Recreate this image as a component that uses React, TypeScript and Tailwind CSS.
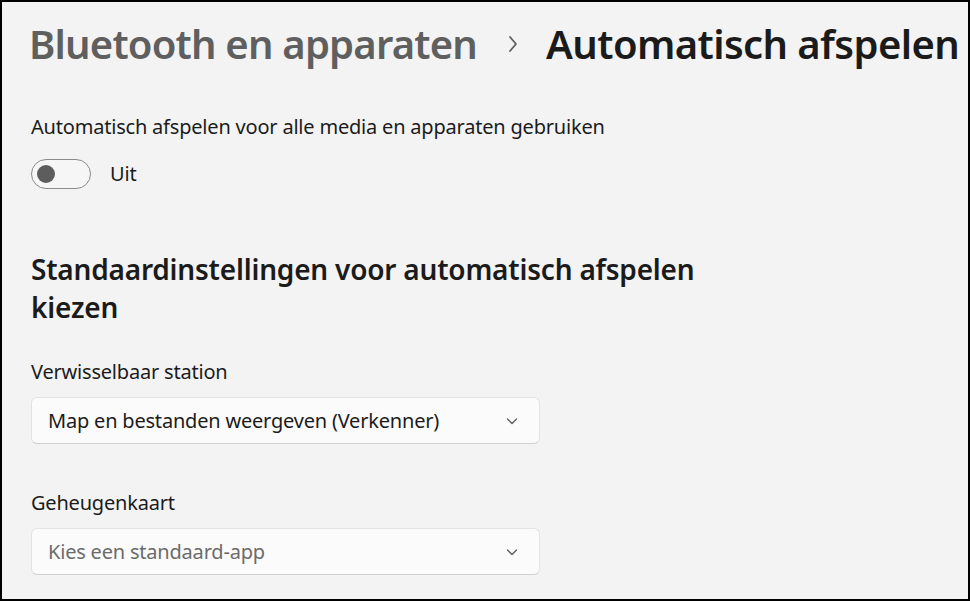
import React from 'react';

const Chevron = () => (
  <svg width="14" height="14" viewBox="0 0 14 14" fill="none">
    <path d="M2.5 5 L7 9.5 L11.5 5" stroke="#5c5c5c" strokeWidth="1.3" strokeLinecap="round" strokeLinejoin="round" />
  </svg>
);

const Select = ({ value, muted }: { value: string; muted?: boolean }) => (
  <div className="flex h-[47px] w-[509px] items-center justify-between rounded-[6px] border border-[#e3e3e3] border-b-[#d0d0d0] bg-[#fbfbfb] pl-4 pr-[20px]">
    <span className={muted ? 'text-[#6b6b6b]' : 'text-[#1b1b1b]'}>{value}</span>
    <Chevron />
  </div>
);

const App = () => {
  return (
    <div
      className="h-[601px] w-[970px] overflow-hidden border-2 border-black bg-[#f3f3f3] text-[20px] tracking-[-0.2px] text-[#1b1b1b]"
      style={{ fontFamily: '"Noto Sans", "Open Sans", sans-serif' }}
    >
      <div className="flex items-center pl-[27px] pt-[12px]">
        <h1 className="text-[40px] font-semibold tracking-[-0.8px] text-[#5f5f5f]">Bluetooth en apparaten</h1>
        <svg className="ml-[29px] mr-[26px]" width="14" height="18" viewBox="0 0 14 18" fill="none">
          <path d="M4 2 L10 9 L4 16" stroke="#5c5c5c" strokeWidth="1.8" strokeLinecap="round" strokeLinejoin="round" />
        </svg>
        <h1 className="text-[40px] font-semibold tracking-[-0.6px] text-[#1b1b1b]">Automatisch afspelen</h1>
      </div>

      <div className="pl-[29px] pt-[38px]">
        <p>Automatisch afspelen voor alle media en apparaten gebruiken</p>
        <div className="mt-[17px] flex items-center gap-[19px]">
          <div className="flex h-[30px] w-[60px] items-center rounded-full border-[1.5px] border-[#8a8a8a] bg-[#f6f6f6] pl-[5px]">
            <div className="h-[18px] w-[18px] rounded-full bg-[#5d5d5d]" />
          </div>
          <span>Uit</span>
        </div>

        <h2 className="mt-[61px] max-w-[700px] text-[28px] font-semibold leading-[38px] tracking-[-0.2px]">
          Standaardinstellingen voor automatisch afspelen kiezen
        </h2>

        <p className="mt-[31px]">Verwisselbaar station</p>
        <div className="mt-[10px]">
          <Select value="Map en bestanden weergeven (Verkenner)" />
        </div>

        <p className="mt-[44px]">Geheugenkaart</p>
        <div className="mt-[10px]">
          <Select value="Kies een standaard-app" muted />
        </div>
      </div>
    </div>
  );
};

export default App;
